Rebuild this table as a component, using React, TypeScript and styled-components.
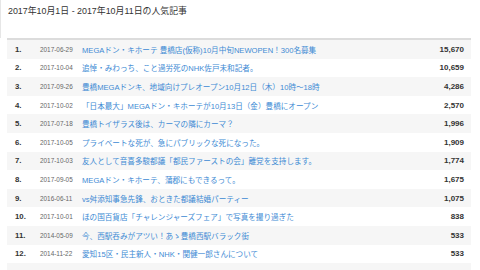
import styled, { createGlobalStyle } from "styled-components";

const GlobalStyle = createGlobalStyle`
    body {
        margin: 0;
        background: #fff;
        font-family: "Liberation Sans", "Noto Sans CJK JP", sans-serif;
    }
`;

const Page = styled.div`
    width: 480px;
    height: 270px;
    overflow: hidden;
    padding: 0 9px 0 7px;
    box-sizing: border-box;
`;

const Heading = styled.h2`
    margin: 0 0 0 -7px;
    padding: 4px 0 0 7px;
    height: 38px;
    box-sizing: border-box;
    border-left: 1px solid #e6e6e6;
    font-size: 8.9px;
    font-weight: normal;
    color: #333;
`;

const Table = styled.table`
    width: 100%;
    border-collapse: collapse;
    border-top: 2px solid #dcdcdc;
`;

const Row = styled.tr<{ $odd: boolean }>`
    background: ${(p) => (p.$odd ? "#f6f6f6" : "#fff")};

    td {
        height: 18.6px;
        padding: 0;
        white-space: nowrap;
    }
`;

const Rank = styled.td`
    width: 25px;
    padding-left: 8px !important;
    font-size: 7.8px;
    font-weight: bold;
    color: #333;
`;

const DateCell = styled.td`
    width: 42px;
    font-size: 6.4px;
    color: #666;
`;

const Title = styled.td`
    font-size: 7.6px;
    color: #3d8ad4;
`;

const Count = styled.td`
    text-align: right;
    padding-right: 7px !important;
    font-size: 8px;
    font-weight: bold;
    color: #333;
`;

const articles = [
    ["2017-06-29", "MEGAドン・キホーテ 豊橋店(仮称)10月中旬NEWOPEN！300名募集", "15,670"],
    ["2017-10-04", "追悼・みわっち、こと過労死のNHK佐戸未和記者。", "10,659"],
    ["2017-09-26", "豊橋MEGAドンキ、地域向けプレオープン10月12日（木）10時～18時", "4,286"],
    ["2017-10-02", "「日本最大」MEGAドン・キホーテが10月13日（金）豊橋にオープン", "2,570"],
    ["2017-07-18", "豊橋トイザラス後は、カーマの隣にカーマ？", "1,996"],
    ["2017-10-05", "プライベートな死が、急にパブリックな死になった。", "1,909"],
    ["2017-10-03", "友人として音喜多駿都議「都民ファーストの会」離党を支持します。", "1,774"],
    ["2017-09-05", "MEGAドン・キホーテ、蒲郡にもできるって。", "1,675"],
    ["2016-06-11", "vs舛添知事急先鋒、おときた都議結婚パーティー", "1,075"],
    ["2017-10-01", "ほの国百貨店「チャレンジャーズフェア」で写真を撮り過ぎた", "838"],
    ["2014-05-09", "今、西駅呑みがアツい！あゝ豊橋西駅バラック街", "533"],
    ["2014-11-22", "愛知15区・民主新人・NHK・関健一郎さんについて", "533"],
    ["", "", ""],
];

const App = () => {
    return (
        <>
            <GlobalStyle />
            <Page>
                <Heading>2017年10月1日 - 2017年10月11日の人気記事</Heading>
                <Table>
                    <tbody>
                        {articles.map(([date, title, count], i) => (
                            <Row key={i} $odd={i % 2 === 0}>
                                <Rank>{date ? `${i + 1}.` : ""}</Rank>
                                <DateCell>{date}</DateCell>
                                <Title>{title}</Title>
                                <Count>{count}</Count>
                            </Row>
                        ))}
                    </tbody>
                </Table>
            </Page>
        </>
    );
};

export default App;
